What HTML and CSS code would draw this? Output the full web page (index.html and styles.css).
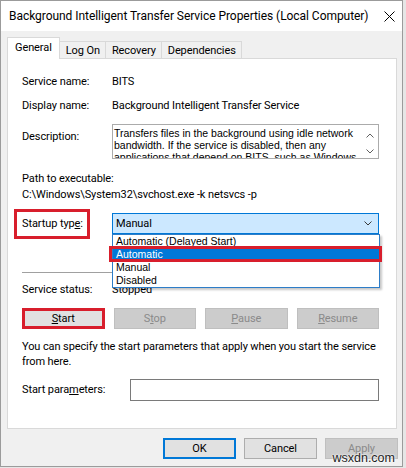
FILE: index.html
```html
<!DOCTYPE html>
<html lang="en">
<head>
<meta charset="utf-8">
<title>Background Intelligent Transfer Service Properties</title>
<link rel="stylesheet" href="styles.css">
</head>
<body>
<div class="window">
  <div class="titlebar">
    <span class="title">Background Intelligent Transfer Service Properties (Local Computer)</span>
    <svg class="close" width="11" height="11" viewBox="0 0 11 11"><path d="M0.5 0.5L10.5 10.5M10.5 0.5L0.5 10.5" stroke="#000" stroke-width="1" fill="none"/></svg>
  </div>
  <div class="content">
    <div class="tabs">
      <div class="tab active">General</div>
      <div class="tab">Log On</div>
      <div class="tab">Recovery</div>
      <div class="tab">Dependencies</div>
    </div>
    <div class="panel">
      <div class="row">
        <span class="label">Service name:</span>
        <span>BITS</span>
      </div>
      <div class="row r-display">
        <span class="label">Display name:</span>
        <span>Background Intelligent Transfer Service</span>
      </div>
      <div class="row r-desc">
        <span class="label desc-label">Description:</span>
        <div class="descbox">
          <div class="desctext">Transfers files in the background using idle network bandwidth. If the service is disabled, then any applications that depend on BITS, such as Windows Update or MSN Explorer, will be unable to automatically download programs and other information.</div>
          <div class="scroll">
            <svg width="8" height="5" viewBox="0 0 8 5"><path d="M0.5 4.5L4 1L7.5 4.5" fill="none" stroke="#606060" stroke-width="1"/></svg>
            <svg width="8" height="5" viewBox="0 0 8 5"><path d="M0.5 0.5L4 4L7.5 0.5" fill="none" stroke="#606060" stroke-width="1"/></svg>
          </div>
        </div>
      </div>
      <div class="path-label">Path to executable:</div>
      <div class="path">C:\Windows\System32\svchost.exe -k netsvcs -p</div>
      <div class="row r-startup">
        <span class="label"><span class="marked-label">Startup typ<u>e</u>:</span></span>
        <div class="combo-wrap">
          <div class="combo">
            <span>Manual</span>
            <svg width="8" height="5" viewBox="0 0 8 5"><path d="M0.5 0.5L4 4L7.5 0.5" fill="none" stroke="#3a3a3a" stroke-width="1"/></svg>
          </div>
          <ul class="dropdown">
            <li>Automatic (Delayed Start)</li>
            <li class="selected">Automatic</li>
            <li>Manual</li>
            <li>Disabled</li>
          </ul>
        </div>
      </div>
      <div class="sep"></div>
      <div class="row r-status">
        <span class="label">Service status:</span>
        <span>Stopped</span>
      </div>
      <div class="buttons">
        <div class="btn marked"><span><u>S</u>tart</span></div>
        <div class="btn disabled"><span>S<u>t</u>op</span></div>
        <div class="btn disabled"><span><u>P</u>ause</span></div>
        <div class="btn disabled"><span><u>R</u>esume</span></div>
      </div>
      <p class="hint"><span class="line">You can specify the start parameters that apply when you start the service</span><span class="line">from here.</span></p>
      <div class="row r-params">
        <span class="label">Start para<u>m</u>eters:</span>
        <div class="input"></div>
      </div>
    </div>
    <div class="footer">
      <div class="btn default">OK</div>
      <div class="btn">Cancel</div>
      <div class="btn disabled">Apply</div>
    </div>
  </div>
  <div class="watermark">wsxdn.com</div>
</div>
</body>
</html>
```
FILE: styles.css
```css
html, body {
  margin: 0;
  padding: 0;
}
body {
  width: 406px;
  height: 468px;
  overflow: hidden;
  background: #e6e6e6;
  font-family: Roboto, "Liberation Sans", sans-serif;
  font-size: 11px;
  letter-spacing: -0.1px;
  color: #000;
}
u {
  text-decoration: underline;
  text-underline-offset: 1px;
}
.window {
  position: relative;
  width: 403px;
  height: 467px;
  box-sizing: border-box;
  border: 1px solid #9b9b9b;
  background: #f0f0f0;
  display: flex;
  flex-direction: column;
}
.titlebar {
  height: 30px;
  background: #fff;
  display: flex;
  align-items: center;
  justify-content: space-between;
  padding: 0 7px 0 8px;
}
.title {
  font-size: 12px;
  letter-spacing: -0.05px;
  white-space: nowrap;
}
.close {
  display: block;
}
.content {
  padding: 6px 5px 0 6px;
}
.tabs {
  display: flex;
  align-items: flex-end;
  height: 21px;
}
.tab {
  height: 17px;
  box-sizing: border-box;
  padding: 0 5px 0 6px;
  border: 1px solid #d9d9d9;
  border-bottom: none;
  margin-left: -1px;
  display: flex;
  align-items: center;
  background: #f0f0f0;
  white-space: nowrap;
}
.tab.active {
  height: 22px;
  margin-left: 0;
  margin-bottom: -1px;
  padding: 0 7px 2px 7px;
  background: #fff;
  position: relative;
  z-index: 1;
}
.panel {
  height: 371px;
  box-sizing: border-box;
  border: 1px solid #d9d9d9;
  background: #fff;
  padding: 15px 17px 0 14px;
}
.row {
  display: grid;
  grid-template-columns: 90px 1fr;
  align-items: center;
  line-height: 16px;
  white-space: nowrap;
}
.r-display {
  margin-top: 8px;
}
.r-desc {
  margin-top: 10px;
  align-items: start;
}
.desc-label {
  margin-top: 5px;
}
.descbox {
  height: 35px;
  box-sizing: border-box;
  border: 1px solid #ababab;
  display: flex;
  overflow: hidden;
  white-space: normal;
  font-family: "Liberation Sans", Arial, sans-serif;
  font-size: 10.5px;
  letter-spacing: 0;
  line-height: 12px;
}
.desctext {
  flex: 1;
  height: 33px;
  overflow: hidden;
  padding: 2px 0 0 1px;
  box-sizing: border-box;
}
.scroll {
  width: 17px;
  flex: none;
  display: flex;
  flex-direction: column;
  align-items: center;
  padding-top: 8px;
  gap: 11px;
}
.scroll svg {
  display: block;
}
.path-label {
  margin-top: 12px;
  line-height: 16px;
}
.path {
  line-height: 16px;
  white-space: nowrap;
}
.r-startup {
  margin-top: 10px;
}
.label {
  position: relative;
}
.marked-label {
  position: relative;
}
.marked-label::after {
  content: "";
  position: absolute;
  left: -8px;
  right: -7px;
  top: -8px;
  bottom: -9px;
  border: 3px solid #d81e2c;
}
.combo-wrap {
  position: relative;
}
.combo {
  height: 21px;
  box-sizing: border-box;
  border: 1px solid #0078d7;
  background: #cce8ff;
  display: flex;
  align-items: center;
  justify-content: space-between;
  padding: 0 6px 0 3px;
}
.combo svg {
  display: block;
}
.dropdown {
  position: absolute;
  top: 21px;
  left: 0;
  width: 268px;
  box-sizing: border-box;
  margin: 0;
  padding: 0;
  list-style: none;
  border: 1px solid #2d7dc8;
  background: #fff;
  box-shadow: 2px 2px 2px rgba(0, 0, 0, 0.22);
  font-family: "Liberation Sans", Arial, sans-serif;
  font-size: 10.5px;
  letter-spacing: 0;
  line-height: 13px;
  z-index: 5;
}
.dropdown li {
  padding-left: 3px;
  position: relative;
}
.dropdown li.selected {
  background: #0078d7;
  color: #fff;
}
.dropdown li.selected::after {
  content: "";
  position: absolute;
  left: -4px;
  right: -3px;
  top: -2px;
  bottom: -1px;
  border: 3px solid #d81e2c;
}
.sep {
  margin-top: 38px;
  height: 1px;
  background: #a0a0a0;
}
.r-status {
  margin-top: 9px;
}
.buttons {
  margin-top: 10px;
  display: grid;
  grid-template-columns: repeat(4, 1fr);
  gap: 9px;
}
.btn {
  height: 21px;
  box-sizing: border-box;
  border: 1px solid #adadad;
  background: #e1e1e1;
  display: flex;
  align-items: center;
  justify-content: center;
  white-space: nowrap;
}
.btn.disabled {
  background: #cccccc;
  border-color: #bfbfbf;
  color: #8a8a8a;
}
.btn.marked {
  outline: 3px solid #d81e2c;
  outline-offset: -3px;
}
.btn.default {
  border: 2px solid #0078d7;
}
.hint {
  margin: 10px 0 0;
  line-height: 15px;
}
.hint .line {
  display: block;
  white-space: nowrap;
}
.r-params {
  grid-template-columns: 108px 1fr;
  margin-top: 10px;
}
.input {
  height: 22px;
  box-sizing: border-box;
  border: 1px solid #7a7a7a;
  background: #fff;
}
.footer {
  display: flex;
  justify-content: flex-end;
  gap: 8px;
  margin-top: 9px;
  margin-right: -1px;
}
.footer .btn {
  width: 73px;
}
.watermark {
  position: absolute;
  right: 7px;
  bottom: 1px;
  font-family: "Liberation Sans", Arial, sans-serif;
  font-size: 12.5px;
  letter-spacing: 0;
  color: #1e1e1e;
  text-shadow: 0 0 2px #fff, 0 0 2px #fff;
}
```
